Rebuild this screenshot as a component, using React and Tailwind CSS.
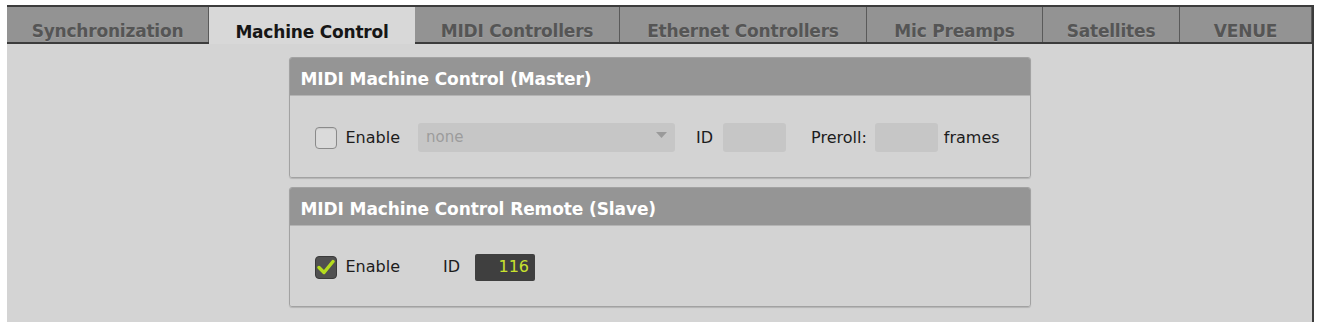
import React from "react";

const tabs = [
  { label: "Synchronization", w: "w-[202px]" },
  { label: "Machine Control", w: "w-[206px]", active: true },
  { label: "MIDI Controllers", w: "w-[205px]" },
  { label: "Ethernet Controllers", w: "w-[247px]" },
  { label: "Mic Preamps", w: "w-[176px]" },
  { label: "Satellites", w: "w-[137px]" },
  { label: "VENUE", w: "w-[132px]" },
];

function Panel({ title, children, bodyH }) {
  return (
    <div className="w-[742px] mx-auto rounded-[3px] border border-[#a2a2a2] shadow-[0_1px_1px_rgba(0,0,0,0.15)] overflow-hidden">
      <div className="h-[38px] bg-[#959595] border-b border-[#b4b4b4] flex items-center pl-[11px] pt-[6px] text-white font-bold text-[17px] tracking-[-0.1px]">
        {title}
      </div>
      <div className={`${bodyH} bg-[#d3d3d3] flex items-center pl-[25px] pt-[2px]`}>{children}</div>
    </div>
  );
}

export default function App() {
  return (
    <div className="w-[1320px] h-[332px] bg-white" style={{ fontFamily: "'DejaVu Sans', 'Liberation Sans', sans-serif" }}>
      <div className="pt-[5px] pl-[7px]">
        <div className="w-[1307px] h-[317px] flex flex-col">
          {/* tab bar */}
          <div className="flex items-start border-t-2 border-[#3c3c3c] h-[39px] pr-[2px] bg-[#3c3c3c]">
            {tabs.map((t, i) => (
              <div
                key={i}
                className={`${t.w} shrink-0 flex items-center justify-center pt-[14px] text-[17px] font-bold tracking-[-0.2px] ${
                  t.active
                    ? "bg-[#d8d8d8] text-[#161616] h-[37px]"
                    : "bg-[#939393] text-[#555555] h-[35px] border-r border-[#5a5a5a] [text-shadow:0_1px_0_rgba(255,255,255,0.15)]"
                }`}
              >
                {t.label}
              </div>
            ))}
          </div>
          {/* content */}
          <div className="flex-1 bg-[#d4d4d4] border-r-2 border-[#3c3c3c] pt-[13px] flex flex-col gap-[9px]">
            <Panel title="MIDI Machine Control (Master)" bodyH="h-[81px]">
              <div className="w-[22px] h-[22px] rounded-[4px] border border-[#8a8a8a] bg-[#dadada] shadow-[inset_0_1px_1px_rgba(0,0,0,0.08)]" />
              <span className="ml-[9px] text-[16px] text-[#1c1c1c]">Enable</span>
              <div className="ml-[18px] w-[257px] h-[29px] rounded-[3px] bg-[#c6c6c6] flex items-center pl-[8px] relative">
                <span className="text-[15px] text-[#9c9c9c]">none</span>
                <svg className="absolute right-[8px] top-[9px]" width="11" height="7" viewBox="0 0 11 7">
                  <polygon points="0,0 11,0 5.5,6" fill="#9a9a9a" />
                </svg>
              </div>
              <span className="ml-[21px] text-[16px] text-[#1c1c1c]">ID</span>
              <div className="ml-[10px] w-[63px] h-[29px] rounded-[3px] bg-[#c6c6c6]" />
              <span className="ml-[25px] text-[16px] text-[#1c1c1c]">Preroll:</span>
              <div className="ml-[8px] w-[63px] h-[29px] rounded-[3px] bg-[#c6c6c6]" />
              <span className="ml-[6px] text-[16px] text-[#1c1c1c]">frames</span>
            </Panel>
            <Panel title="MIDI Machine Control Remote (Slave)" bodyH="h-[80px]">
              <div className="w-[22px] h-[23px] rounded-[4px] border border-[#3a3a3a] bg-[#505050] flex items-center justify-center">
                <svg width="18" height="16" viewBox="0 0 18 16">
                  <path d="M2 8.5 L7 13.5 L16 2.5" fill="none" stroke="#b5dc1e" strokeWidth="3.4" strokeLinecap="round" strokeLinejoin="round" />
                </svg>
              </div>
              <span className="ml-[9px] text-[16px] text-[#1c1c1c]">Enable</span>
              <span className="ml-[43px] text-[16px] text-[#1c1c1c]">ID</span>
              <div className="ml-[15px] w-[60px] h-[27px] rounded-[2px] bg-[#3f3f3f] flex items-center justify-end pr-[6px]">
                <span className="text-[16px] text-[#c8e22e]">116</span>
              </div>
            </Panel>
          </div>
        </div>
      </div>
    </div>
  );
}
